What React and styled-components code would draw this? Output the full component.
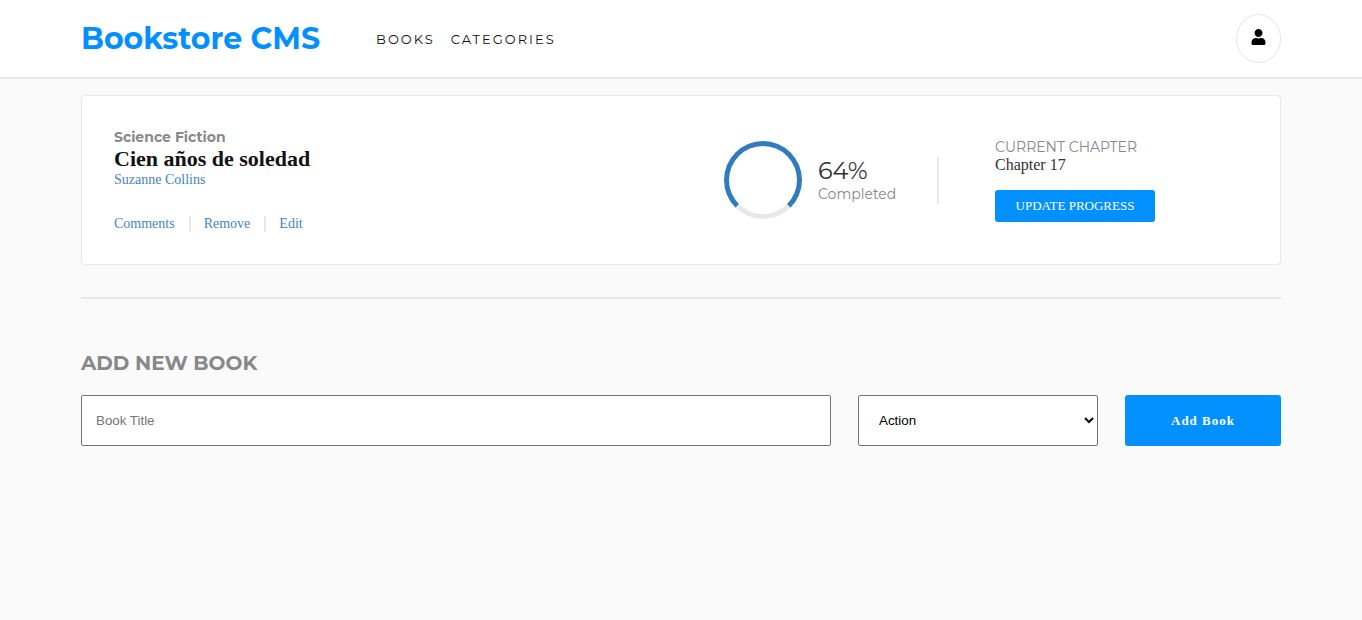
import React from "react";
import styled, { createGlobalStyle } from "styled-components";
import { FaUser } from "react-icons/fa";

const sans = `Montserrat, Inter, "Open Sans", sans-serif`;
const serif = `"Liberation Serif", "Times New Roman", serif`;

const GlobalStyle = createGlobalStyle`
  *, *::before, *::after { box-sizing: border-box; }
  body { margin: 0; background: #fafafa; font-family: ${serif}; color: #121212; }
  h1, h2, h3, p, ul { margin: 0; padding: 0; }
  a { text-decoration: none; }
`;

const Container = styled.div`
  width: calc(100% - 32px);
  max-width: 1200px;
  margin: 0 auto;
`;

const Header = styled.header`
  background: #fff;
  border-bottom: 2px solid #e8e8e8;
`;

const HeaderInner = styled(Container)`
  display: flex;
  align-items: center;
  padding: 14px 0;
`;

const Logo = styled.h1`
  font: 700 30px/36px ${sans};
  color: #0290ff;
`;

const Nav = styled.ul`
  display: flex;
  gap: 16px;
  margin-left: 56px;
  list-style: none;
`;

const NavLink = styled.a`
  font: 400 13px/16px ${sans};
  letter-spacing: 2px;
  text-transform: uppercase;
  color: #121212;
`;

const UserButton = styled.button`
  display: flex;
  width: 45px;
  height: 49px;
  margin-left: auto;
  padding: 14px;
  border: 1px solid #e8e8e8;
  border-radius: 50%;
  background: #fff;
  color: #000;
  font-size: 16px;
`;

const BookCard = styled.article`
  display: flex;
  align-items: center;
  margin-top: 16px;
  padding: 32px;
  border: 1px solid #e8e8e8;
  border-radius: 4px;
  background: #fff;
`;

const BookInfo = styled.div`
  flex: 1;
`;

const Category = styled.p`
  font: 700 14px/18px ${sans};
  color: #888;
`;

const BookTitle = styled.h2`
  font: 700 22px/26px ${serif};
`;

const Author = styled.a`
  display: block;
  font-size: 14px;
  line-height: 16px;
  color: #4386bf;
`;

const Actions = styled.div`
  display: flex;
  margin-top: 28px;
`;

const ActionButton = styled.button`
  padding: 0;
  border: 0;
  background: none;
  font: 400 14px/16px ${serif};
  color: #4386bf;

  & + & {
    margin-left: 14px;
    padding-left: 13px;
    border-left: 2px solid #e8e8e8;
  }
`;

const Progress = styled.div`
  display: flex;
  align-items: center;
  gap: 16px;
  width: 213px;
`;

const Ring = styled.div`
  width: 78px;
  height: 78px;
  border: 5px solid #307bbe;
  border-bottom-color: #e8e8e8;
  border-radius: 50%;
`;

const Percent = styled.p`
  font: 400 24px/28px ${sans};
  color: #333;
`;

const Muted = styled.p`
  font: 400 14px/18px ${sans};
  color: #888;
`;

const Chapter = styled.div`
  display: flex;
  align-items: center;
  width: 311px;

  &::before {
    content: "";
    width: 2px;
    height: 47px;
    margin-right: 56px;
    background: #e8e8e8;
  }
`;

const ChapterName = styled.p`
  font-size: 16px;
  line-height: 18px;
  color: #333;
`;

const PrimaryButton = styled.button`
  border: 0;
  border-radius: 3px;
  background: #0290ff;
  font: 400 13px/16px ${serif};
  color: #fff;
`;

const UpdateButton = styled(PrimaryButton)`
  width: 160px;
  height: 32px;
  margin-top: 16px;
  text-transform: uppercase;
`;

const Divider = styled.hr`
  height: 2px;
  margin: 32px 0 52px;
  border: 0;
  background: #e8e8e8;
`;

const FormTitle = styled.h3`
  font: 700 20px/24px ${sans};
  color: #888;
  text-transform: uppercase;
`;

const BookForm = styled.form`
  display: grid;
  grid-template-columns: 1fr 240px 156px;
  column-gap: 27px;
  margin-top: 20px;
`;

const fieldStyle = `
  height: 51px;
  border: 1px solid #767676;
  border-radius: 2px;
  background-color: #fff;
  font-family: "Liberation Sans", Arial, sans-serif;
`;

const TitleInput = styled.input`
  ${fieldStyle}
  min-width: 0;
  padding: 0 14px;
  &::placeholder { color: #757575; }
`;

const CategorySelect = styled.select`
  ${fieldStyle}
  padding: 0 0 0 16px;
  color: #000;
`;

const AddButton = styled(PrimaryButton)`
  font-weight: 700;
  letter-spacing: 1px;
`;

export default function App() {
  return (
    <>
      <GlobalStyle />
      <Header>
        <HeaderInner>
          <Logo>Bookstore CMS</Logo>
          <nav>
            <Nav>
              <li><NavLink href="#books">Books</NavLink></li>
              <li><NavLink href="#categories">Categories</NavLink></li>
            </Nav>
          </nav>
          <UserButton type="button" aria-label="User profile"><FaUser /></UserButton>
        </HeaderInner>
      </Header>
      <Container as="main">
        <BookCard>
          <BookInfo>
            <Category>Science Fiction</Category>
            <BookTitle>Cien años de soledad</BookTitle>
            <Author href="#author">Suzanne Collins</Author>
            <Actions>
              <ActionButton type="button">Comments</ActionButton>
              <ActionButton type="button">Remove</ActionButton>
              <ActionButton type="button">Edit</ActionButton>
            </Actions>
          </BookInfo>
          <Progress>
            <Ring />
            <div>
              <Percent>64%</Percent>
              <Muted>Completed</Muted>
            </div>
          </Progress>
          <Chapter>
            <div>
              <Muted>CURRENT CHAPTER</Muted>
              <ChapterName>Chapter 17</ChapterName>
              <UpdateButton type="button">Update progress</UpdateButton>
            </div>
          </Chapter>
        </BookCard>
        <Divider />
        <section>
          <FormTitle>Add new book</FormTitle>
          <BookForm onSubmit={(event) => event.preventDefault()}>
            <TitleInput type="text" placeholder="Book Title" aria-label="Book title" />
            <CategorySelect aria-label="Category" defaultValue="Action">
              <option>Action</option>
              <option>Science Fiction</option>
              <option>Economy</option>
            </CategorySelect>
            <AddButton type="submit">Add Book</AddButton>
          </BookForm>
        </section>
      </Container>
    </>
  );
}
